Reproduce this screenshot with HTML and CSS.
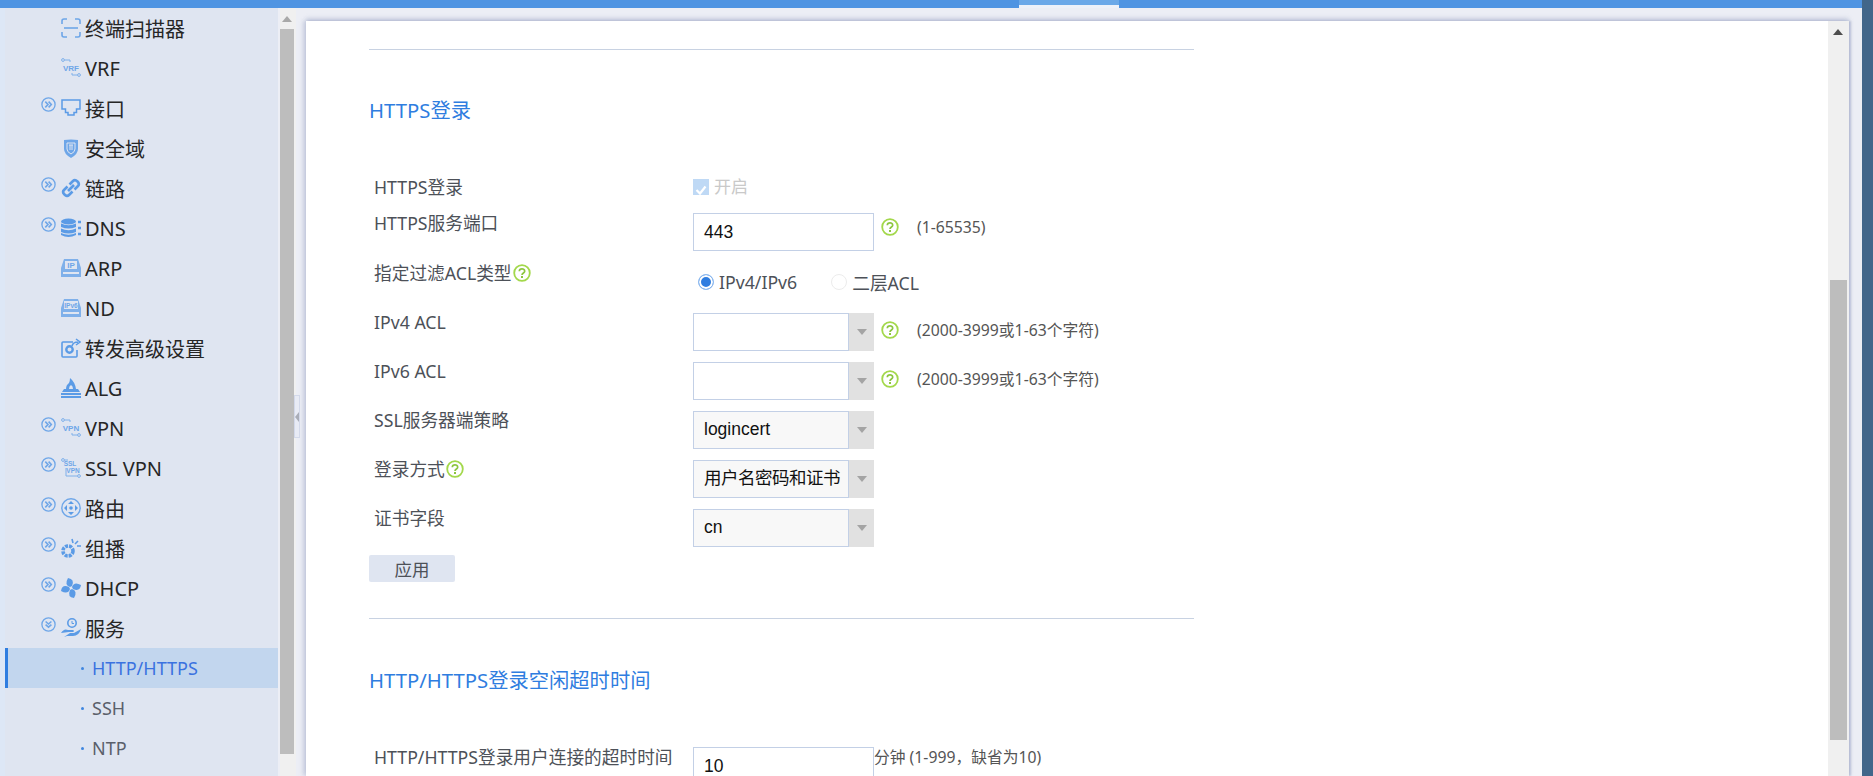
FILE: index.html
```html
<!DOCTYPE html>
<html lang="zh-CN">
<head>
<meta charset="utf-8">
<title>HTTP/HTTPS</title>
<link rel="stylesheet" href="styles.css">
</head>
<body>
<svg class="defs" width="0" height="0" aria-hidden="true">
  <symbol id="more" viewBox="0 0 15 15"><circle cx="7.5" cy="7.5" r="6.6" fill="none" stroke="#6ea6e8" stroke-width="1.3"/><path d="M4.3 4.6 7 7.5 4.3 10.4M7.6 4.6 10.3 7.5 7.6 10.4" fill="none" stroke="#6ea6e8" stroke-width="1.6"/></symbol>
  <symbol id="open" viewBox="0 0 15 15"><circle cx="7.5" cy="7.5" r="6.6" fill="none" stroke="#6ea6e8" stroke-width="1.3"/><path d="M4.6 4.5 7.5 7 10.4 4.5M4.6 7.6 7.5 10.2 10.4 7.6" fill="none" stroke="#6ea6e8" stroke-width="1.6"/></symbol>
  <symbol id="help" viewBox="0 0 18 18"><circle cx="9" cy="9" r="7.8" fill="#fff" stroke="#a3d84b" stroke-width="1.8"/><path d="M6.3 7.2C6.4 4.2 11.7 4.2 11.7 7.2 11.7 9 9 8.9 9 11" fill="none" stroke="#8cc63f" stroke-width="1.7"/><rect x="8" y="12" width="2" height="2" fill="#8cc63f"/></symbol>
</svg>

<header class="topbar"><div class="topbar-tab"></div></header>

<div class="workspace">
  <nav class="sidebar">
    <ul class="nav">
      <li class="nav-item"><span class="toggle"></span><svg class="nav-icon" viewBox="0 0 20 20"><path d="M1 6V3Q1 1 3 1H6M14 1H17Q19 1 19 3V6M1 14V17Q1 19 3 19H6M14 19H17Q19 19 19 17V14" fill="none" stroke="#6ea6e8" stroke-width="1.6"/><path d="M3 10H17" stroke="#6ea6e8" stroke-width="1.6"/></svg><span>终端扫描器</span></li>
      <li class="nav-item"><span class="toggle"></span><svg class="nav-icon" viewBox="0 0 20 20"><circle cx="2" cy="2" r="1.4" fill="none" stroke="#7fb0ea"/><circle cx="18" cy="17" r="1.4" fill="none" stroke="#7fb0ea"/><path d="M3.500 2H9V4M16.500 17H11V15" fill="none" stroke="#7fb0ea"/><text class="icon-text" x="10" y="13">VRF</text></svg><span>VRF</span></li>
      <li class="nav-item"><svg class="toggle"><use href="#more"/></svg><svg class="nav-icon" viewBox="0 0 20 20"><path d="M1 2H19V11H15.500V14.500H13V17H7V14.500H4.500V11H1Z" fill="none" stroke="#5b9be6" stroke-width="1.5"/></svg><span>接口</span></li>
      <li class="nav-item"><span class="toggle"></span><svg class="nav-icon" viewBox="0 0 20 20"><path d="M3 2Q10 1 17 2V11Q17 16 10 20 3 16 3 11Z" fill="#6ea6e8"/><path d="M6 5H14V11Q14 14 10 16 6 14 6 11Z" fill="none" stroke="#dfe5f1"/><path d="M8 7H12M9 7V12M11 7V12" stroke="#dfe5f1"/></svg><span>安全域</span></li>
      <li class="nav-item"><svg class="toggle"><use href="#more"/></svg><svg class="nav-icon" viewBox="0 0 20 20"><path d="M8.500 6.500 12 3Q14 1 16.500 3.500 19 6 17 8L13.500 11.500M11.500 13.500 8 17Q6 19 3.500 16.500 1 14 3 12L6.500 8.500" fill="none" stroke="#5b9be6" stroke-width="2.600"/><path d="M7 13 13 7" stroke="#5b9be6" stroke-width="2.600"/></svg><span>链路</span></li>
      <li class="nav-item"><svg class="toggle"><use href="#more"/></svg><svg class="nav-icon" viewBox="0 0 20 20"><ellipse cx="7.500" cy="3.500" rx="7.500" ry="3" fill="#5b9be6"/><path d="M0 5.500Q7.500 9 15 5.500V9Q7.500 12 0 9ZM0 10.500Q7.500 14 15 10.500V14Q7.500 17 0 14ZM0 15Q7.500 18.500 15 15V17Q7.500 21 0 17Z" fill="#5b9be6"/><path d="M17 4H20M17 10H20M17 16H20" stroke="#5b9be6" stroke-width="2.400"/></svg><span>DNS</span></li>
      <li class="nav-item"><span class="toggle"></span><svg class="nav-icon" viewBox="0 0 20 20"><path d="M3 1H17L20 10V19H0V10Z" fill="#7fb0ea"/><rect x="4" y="3" width="12" height="8" fill="#dfe5f1"/><rect x="2" y="14" width="16" height="2" fill="#dfe5f1"/><text class="icon-text" x="10" y="10">IP</text></svg><span>ARP</span></li>
      <li class="nav-item"><span class="toggle"></span><svg class="nav-icon" viewBox="0 0 20 20"><path d="M3 1H17L20 10V19H0V10Z" fill="#7fb0ea"/><rect x="3" y="3" width="14" height="8" fill="#dfe5f1"/><rect x="2" y="14" width="16" height="2" fill="#dfe5f1"/><text class="icon-text icon-text-small" x="10" y="9.500">IPv6</text></svg><span>ND</span></li>
      <li class="nav-item"><span class="toggle"></span><svg class="nav-icon" viewBox="0 0 20 20"><path d="M12 4H2Q1 4 1 5V18Q1 19 2 19H15Q16 19 16 18V12" fill="none" stroke="#5b9be6" stroke-width="1.600"/><circle cx="8.500" cy="11.500" r="3.200" fill="none" stroke="#5b9be6" stroke-width="2.400"/><path d="M11 8Q12 4 17 4M15 1 19 4 15 7" fill="none" stroke="#5b9be6" stroke-width="1.500"/></svg><span>转发高级设置</span></li>
      <li class="nav-item"><span class="toggle"></span><svg class="nav-icon" viewBox="0 0 20 20"><path d="M5 11Q5 7 8 5 9 3 9 0 14 4 15 11H12Q12 8 10 7 8 8 8 11Z" fill="#5b9be6"/><path d="M3 11H17L19 14H1Z" fill="#5b9be6"/><path d="M0 15H20V17H0ZM0 18H20V20H0Z" fill="#5b9be6"/></svg><span>ALG</span></li>
      <li class="nav-item"><svg class="toggle"><use href="#more"/></svg><svg class="nav-icon" viewBox="0 0 20 20"><circle cx="2" cy="2" r="1.400" fill="none" stroke="#7fb0ea"/><circle cx="18" cy="17" r="1.400" fill="none" stroke="#7fb0ea"/><path d="M3.500 2H9V4M16.500 17H11V15" fill="none" stroke="#7fb0ea"/><text class="icon-text" x="10" y="13">VPN</text></svg><span>VPN</span></li>
      <li class="nav-item"><svg class="toggle"><use href="#more"/></svg><svg class="nav-icon" viewBox="0 0 20 20"><circle cx="2" cy="2" r="1.400" fill="none" stroke="#7fb0ea"/><circle cx="18" cy="18" r="1.400" fill="none" stroke="#7fb0ea"/><path d="M3.500 2H7M16.500 18H5V10" fill="none" stroke="#7fb0ea"/><text class="icon-text icon-text-small" x="9" y="8">SSL</text><text class="icon-text icon-text-small" x="12" y="15">VPN</text></svg><span>SSL VPN</span></li>
      <li class="nav-item"><svg class="toggle"><use href="#more"/></svg><svg class="nav-icon" viewBox="0 0 20 20"><circle cx="10" cy="10" r="9.200" fill="none" stroke="#6ea6e8" stroke-width="1.400"/><path d="M10 3 13 6H7ZM10 17 7 14H13ZM3 10 6 7V13ZM17 10 14 13V7Z" fill="#5b9be6"/><circle cx="10" cy="10" r="1.800" fill="#5b9be6"/></svg><span>路由</span></li>
      <li class="nav-item"><svg class="toggle"><use href="#more"/></svg><svg class="nav-icon" viewBox="0 0 20 20"><circle cx="7" cy="13" r="5" fill="none" stroke="#5b9be6" stroke-width="3.600" stroke-dasharray="3 1"/><path d="M11 1 12 5M17 3 14 6M20 8H16" stroke="#5b9be6" stroke-width="1.600"/></svg><span>组播</span></li>
      <li class="nav-item"><svg class="toggle"><use href="#more"/></svg><svg class="nav-icon" viewBox="0 0 20 20"><path d="M9 9Q3 7 7 0 14 1 11 8ZM11 9Q13 3 20 7 19 14 12 11ZM11 11Q17 13 13 20 6 19 9 12ZM9 11Q7 17 0 13 1 6 8 9Z" fill="#5b9be6"/></svg><span>DHCP</span></li>
      <li class="nav-item"><svg class="toggle"><use href="#open"/></svg><svg class="nav-icon" viewBox="0 0 20 20"><circle cx="11" cy="5" r="4.200" fill="none" stroke="#5b9be6" stroke-width="1.600"/><path d="M11 3V5.500H13" fill="none" stroke="#5b9be6"/><path d="M0 15Q3 10 7 12H12Q14 13 12 14H8M9 15H13L20 11Q18 18 12 18H6L3 19Z" fill="#5b9be6"/></svg><span>服务</span></li>
      <li class="nav-sub nav-sub-active"><span>HTTP/HTTPS</span></li>
      <li class="nav-sub"><span>SSH</span></li>
      <li class="nav-sub"><span>NTP</span></li>
    </ul>
  </nav>

  <div class="side-scroll">
    <div class="side-scroll-up"><span class="arrow-up arrow-up-light"></span></div>
    <div class="side-scroll-thumb"></div>
  </div>
  <div class="splitter"><span class="splitter-arrow"></span></div>

  <div class="gutter">
    <div class="panel">
      <main class="content">
        <hr class="rule rule-top">
        <h2 class="section-title title-first">HTTPS登录</h2>

        <div class="row row-check">
          <div class="label">HTTPS登录</div>
          <div class="field check-field"><span class="checkbox"><svg viewBox="0 0 16 16" width="16" height="16"><path d="M3.500 8 7 11.500 12.500 4.500" fill="none" stroke="#fff" stroke-width="2.200"/></svg></span><span class="check-text">开启</span></div>
        </div>

        <div class="row row-port">
          <div class="label">HTTPS服务端口</div>
          <div class="field">
            <div class="input">443</div>
            <svg class="help help-field"><use href="#help"/></svg>
            <span class="hint">(1-65535)</span>
          </div>
        </div>

        <div class="row row-radio">
          <div class="label">指定过滤ACL类型<svg class="help help-label"><use href="#help"/></svg></div>
          <div class="field radio-field">
            <span class="radio radio-on"></span><span class="radio-text">IPv4/IPv6</span>
            <span class="radio radio-off"></span><span class="radio-text">二层ACL</span>
          </div>
        </div>

        <div class="row row-select">
          <div class="label">IPv4 ACL</div>
          <div class="field">
            <div class="select"><div class="select-value"></div><div class="select-btn"><span class="caret"></span></div></div>
            <svg class="help help-field"><use href="#help"/></svg>
            <span class="hint">(2000-3999或1-63个字符)</span>
          </div>
        </div>

        <div class="row row-select">
          <div class="label">IPv6 ACL</div>
          <div class="field">
            <div class="select"><div class="select-value"></div><div class="select-btn"><span class="caret"></span></div></div>
            <svg class="help help-field"><use href="#help"/></svg>
            <span class="hint">(2000-3999或1-63个字符)</span>
          </div>
        </div>

        <div class="row row-select">
          <div class="label">SSL服务器端策略</div>
          <div class="field">
            <div class="select select-off"><div class="select-value">logincert</div><div class="select-btn"><span class="caret"></span></div></div>
          </div>
        </div>

        <div class="row row-select">
          <div class="label">登录方式<svg class="help help-label"><use href="#help"/></svg></div>
          <div class="field">
            <div class="select select-off"><div class="select-value">用户名密码和证书</div><div class="select-btn"><span class="caret"></span></div></div>
          </div>
        </div>

        <div class="row row-select">
          <div class="label">证书字段</div>
          <div class="field">
            <div class="select select-off"><div class="select-value">cn</div><div class="select-btn"><span class="caret"></span></div></div>
          </div>
        </div>

        <button class="apply" type="button">应用</button>
        <hr class="rule rule-bottom">
        <h2 class="section-title title-second">HTTP/HTTPS登录空闲超时时间</h2>

        <div class="row row-timeout">
          <div class="label">HTTP/HTTPS登录用户连接的超时时间</div>
          <div class="field">
            <div class="input">10</div>
            <span class="hint hint-tight">分钟 (1-999，缺省为10)</span>
          </div>
        </div>
      </main>
      <div class="main-scroll">
        <div class="main-scroll-up"><span class="arrow-up"></span></div>
        <div class="main-scroll-track"><div class="main-scroll-thumb"></div></div>
      </div>
    </div>
  </div>
  <div class="edge"></div>
</div>
</body>
</html>
```
FILE: styles.css
```css
* { box-sizing: border-box; }
html, body { margin: 0; height: 100%; overflow: hidden; }
body {
  display: flex;
  flex-direction: column;
  background: #eceef5;
  font-family: "Noto Sans", "Noto Sans CJK SC", sans-serif;
  color: #4d4d4d;
}
.defs { position: absolute; }

.topbar { flex: none; height: 8px; background: #4f94e2; padding-left: 1019px; }
.topbar-tab { width: 100px; height: 8px; background: #6aa8e8; border-bottom: 3px solid #edf1f9; }

.workspace { flex: 1; min-height: 0; display: flex; position: relative; }

.sidebar {
  flex: none;
  width: 278px;
  background: #dfe5f1;
  border-left: 5px solid #dde7f6;
  overflow: hidden;
}
.nav { list-style: none; margin: 0; padding: 0; }
.nav-item {
  height: 40px;
  display: flex;
  align-items: center;
  padding-left: 36px;
  font-size: 20px;
  color: #262626;
}
.toggle { flex: none; width: 15px; height: 15px; margin-right: 5px; position: relative; top: -4px; }
.nav-icon { flex: none; width: 20px; height: 20px; margin-right: 4px; }
.icon-text { font: bold 8px "Liberation Sans", sans-serif; fill: #6ea6e8; text-anchor: middle; }
.icon-text-small { font-size: 6.500px; }
.nav-sub {
  height: 40px;
  display: flex;
  align-items: center;
  padding-left: 87px;
  font-size: 18px;
  color: #5a5f6b;
  position: relative;
}
.nav-sub::before {
  content: "";
  position: absolute;
  left: 76px;
  top: 19px;
  width: 3px;
  height: 3px;
  background: #3f86df;
  border-radius: 50%;
}
.nav-sub-active { background: #c2d6ee; color: #3a72e0; box-shadow: inset 3px 0 0 #2f7de0; }

.side-scroll { flex: none; width: 16px; margin-left: 2px; background: #f0f0f0; display: flex; flex-direction: column; }
.side-scroll-up { height: 21px; display: flex; justify-content: center; padding-top: 8px; padding-right: 2px; }
.side-scroll-thumb { height: 725px; width: 14px; background: #bdbdbd; }
.arrow-up { display: block; width: 0; height: 0; border: 5px solid transparent; border-top: 0; border-bottom: 6px solid #4d4d4d; }
.arrow-up-light { border-bottom-color: #a9a9a9; }

.splitter {
  position: absolute;
  left: 294px;
  top: 387px;
  width: 6px;
  height: 43px;
  background: #e8ebf5;
  border: 1px solid #d3d9ea;
  display: flex;
  align-items: center;
  justify-content: flex-end;
}
.splitter-arrow { width: 0; height: 0; border: 5px solid transparent; border-left: 0; border-right: 4px solid #a9adb8; }

.gutter {
  flex: 1;
  min-width: 0;
  padding: 13px 13px 0 10px;
  background: #eceef5;
  display: flex;
}
.panel {
  flex: 1;
  min-width: 0;
  display: flex;
  background: #fff;
  box-shadow: 0 -3px 4px rgba(150, 160, 195, .35), -3px 0 4px rgba(150, 160, 195, .35), 2px 0 2px rgba(150, 160, 195, .55);
  overflow: hidden;
}
.content { flex: 1; min-width: 0; padding: 28px 0 0 63px; overflow: hidden; }

.rule { width: 825px; height: 0; margin: 0; border: 0; border-top: 1px solid #c8d2e2; }
.section-title { margin: 0; font-size: 20.300px; font-weight: 400; line-height: 28px; color: #2f7de0; }
.title-first { padding-top: 46px; margin-bottom: 52px; }
.title-second { padding-top: 47px; margin-bottom: 52px; }

.row { display: flex; align-items: flex-start; font-size: 17.700px; }
.row-check { height: 36px; }
.row-port { height: 50px; }
.row-radio { height: 49px; }
.row-select { height: 49px; }
.row-timeout { height: 60px; }
.label {
  flex: none;
  width: 324px;
  margin-top: -1px;
  padding-left: 5px;
  line-height: 24px;
  color: #4d5158;
  white-space: nowrap;
  display: flex;
  align-items: center;
}
.field { display: flex; align-items: flex-start; flex: 1; min-width: 0; }
.row-port .field, .row-timeout .field { padding-top: 1px; }
.row-select .field { padding-top: 2px; }

.input, .select {
  width: 181px;
  height: 38px;
  border: 1px solid #c3d0e6;
  background: #fff;
  font: 17.500px/35px "Liberation Sans", sans-serif;
  color: #111;
}
.input { padding-left: 10px; line-height: 37px; }
.select { display: flex; border-right: 0; }
.select-value { flex: 1; min-width: 0; padding-left: 10px; white-space: nowrap; overflow: hidden; border-right: 1px solid #c3d0e6; }
.select-off .select-value { background: #f8f8f8; }
.select-btn { flex: none; width: 25px; margin: -1px 0; background: #e1e1e1; display: flex; align-items: center; justify-content: center; }
.caret { width: 0; height: 0; border: 5.500px solid transparent; border-bottom: 0; border-top: 6px solid #a4a4a4; }

.help { width: 18px; height: 18px; flex: none; }
.help-field { margin: 5px 0 0 7px; }
.row-select .help-field { margin-top: 8px; }
.help-label { margin-left: 1px; }
.hint { margin-left: 18px; font-size: 15.750px; line-height: 24px; margin-top: 2px; color: #555; white-space: nowrap; }
.row-select .hint { margin-top: 5px; }
.hint-tight { margin-left: 0; margin-top: -2px; }

.check-field { align-items: center; height: 24px; margin-top: -1px; }
.checkbox { width: 16px; height: 16px; background: #bfd9f5; display: block; }
.check-text { margin-left: 5px; font-size: 17px; color: #c9c9c9; line-height: 24px; }

.radio-field { align-items: center; height: 40px; padding-left: 5px; }
.radio { width: 16px; height: 16px; border-radius: 50%; flex: none; }
.radio-on { border: 1.500px solid #8fbbf0; background: #2f7de0; box-shadow: inset 0 0 0 2px #fff; }
.radio-off { border: 1px solid #ececec; background: #fff; margin-left: 34px; }
.radio-text { margin-left: 5px; color: #4d5158; }

.apply {
  display: block;
  width: 86px;
  height: 27px;
  margin: -1px 0 0 0;
  padding: 0;
  border: 0;
  border-radius: 2px;
  background: #dfe5f1;
  font: 17.500px "Noto Sans", "Noto Sans CJK SC", sans-serif;
  color: #4d5158;
}
.rule-bottom { margin-top: 36px; }

.main-scroll { flex: none; width: 21px; background: #f0f0f0; display: flex; flex-direction: column; }
.main-scroll-up { height: 22px; padding: 8px 0 0 5px; }
.main-scroll-track { padding: 237px 2px 0; }
.main-scroll-thumb { height: 460px; background: #bdbdbd; }

.edge { flex: none; width: 11px; background: #41668a; margin-top: -8px; }
```
